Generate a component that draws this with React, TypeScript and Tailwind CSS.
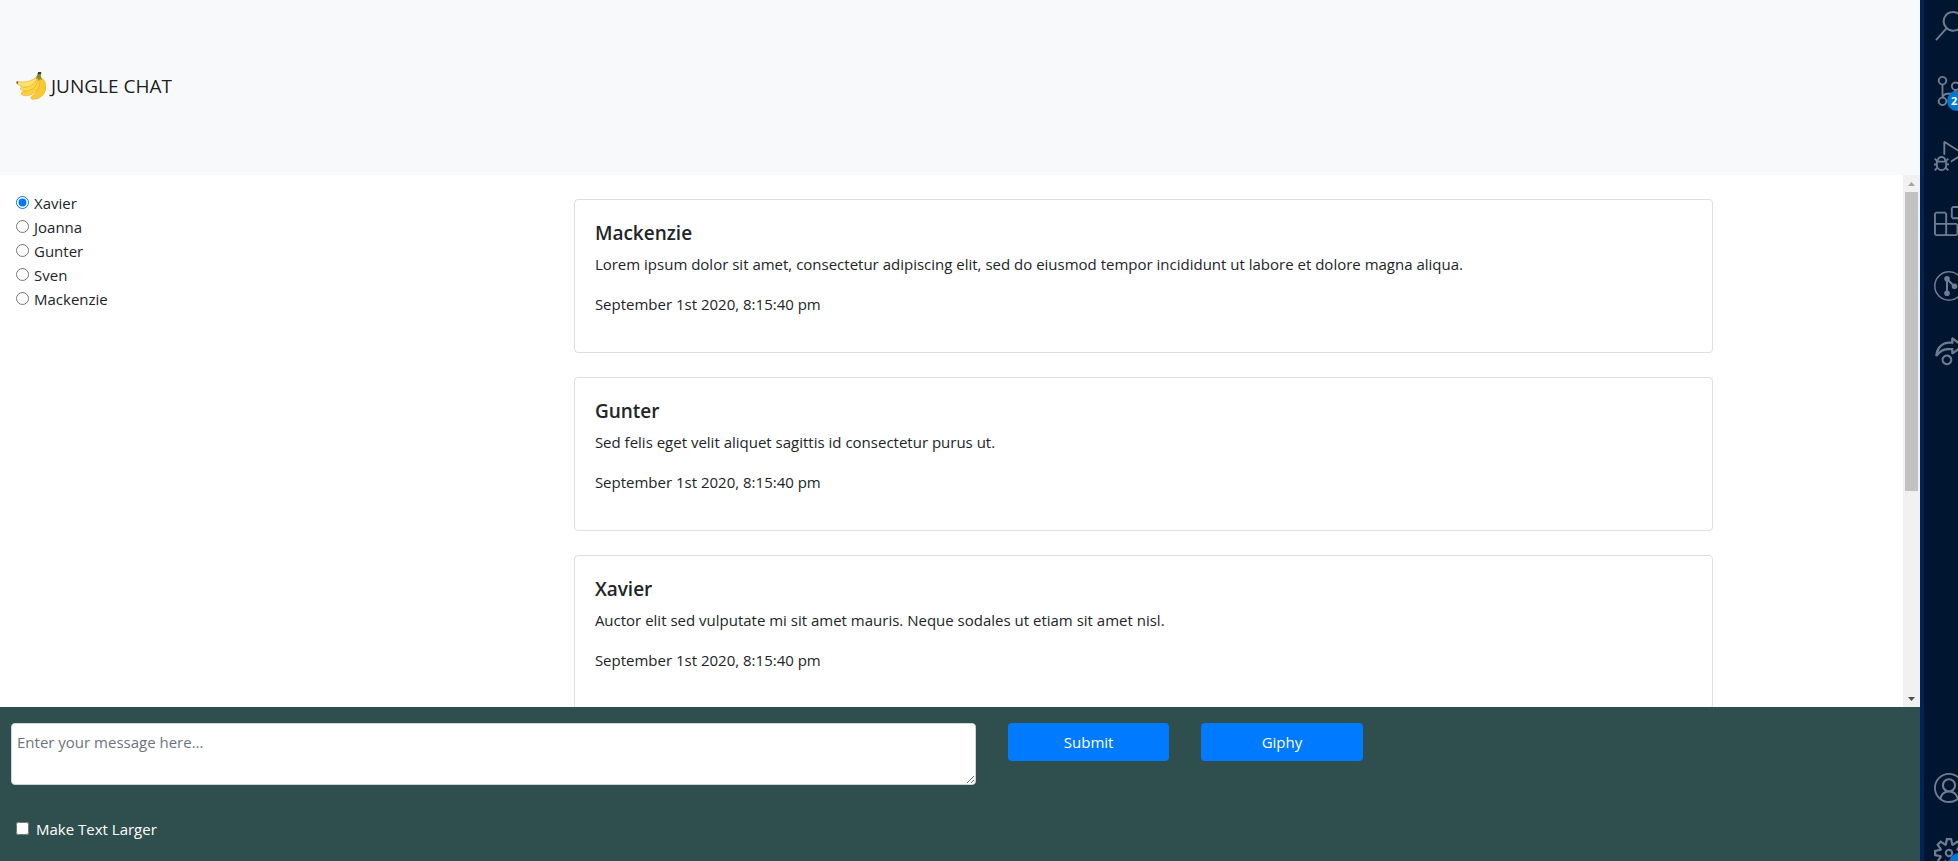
import { useState } from 'react';
import type { ReactNode } from 'react';
import {
  VscAccount,
  VscDebugAlt,
  VscExtensions,
  VscLiveShare,
  VscSearch,
  VscSettingsGear,
  VscSourceControl,
} from 'react-icons/vsc';

const users = ['Xavier', 'Joanna', 'Gunter', 'Sven', 'Mackenzie'];

const messages = [
  {
    author: 'Mackenzie',
    body: 'Lorem ipsum dolor sit amet, consectetur adipiscing elit, sed do eiusmod tempor incididunt ut labore et dolore magna aliqua.',
    date: 'September 1st 2020, 8:15:40 pm',
  },
  {
    author: 'Gunter',
    body: 'Sed felis eget velit aliquet sagittis id consectetur purus ut.',
    date: 'September 1st 2020, 8:15:40 pm',
  },
  {
    author: 'Xavier',
    body: 'Auctor elit sed vulputate mi sit amet mauris. Neque sodales ut etiam sit amet nisl.',
    date: 'September 1st 2020, 8:15:40 pm',
  },
];

function BananaLogo() {
  return (
    <svg viewBox="0 0 30 30" className="size-[30px] shrink-0" aria-hidden="true">
      <path d="M23.500 6C28.500 8 31 13 29.500 19c-1.500 6-7 9.500-13 9.300-1.800-.2-2.200-2-.6-3.100C21 22 24.500 15 23.500 6z" fill="#fbc92f" stroke="#dba120" strokeWidth=".5" />
      <path d="M23.200 6c2 7-.7 13-6 16.500-3.500 2.300-8 2.800-11 1.500-1.800-1-1.200-3 .8-3.200C14 20 20 15 21.500 6z" fill="#fdd13c" stroke="#dba120" strokeWidth=".5" />
      <path d="M22.500 5.500C22 13 18 19 11 20c-3 .4-6-.4-6.500-1.700-.4-1.300.8-2.100 2.500-2.100C14 15.500 19 12 21 5.500z" fill="#fdd94f" stroke="#dba120" strokeWidth=".5" />
      <path d="M22.500 5C20 12.500 14 17 7.500 16.200 3.500 15.500 1 13.500.7 11.200c0-.8.8-1 1.500-.7C9 11.700 16 10.500 21 5z" fill="#ffe168" stroke="#dba120" strokeWidth=".5" />
      <path d="M22 1.500h3l-.2 3.500 1.200 4-2-1-1.500 2-.8-3-2 1.500z" fill="#8b8b2c" />
      <path d="M22 1h3.200v2.200h-3.400z" fill="#4a3a26" />
      <path d="M.4 10.500l1.700.2-.1 1.800-1.200.2z" fill="#5b4425" />
    </svg>
  );
}

function GitLensIcon() {
  return (
    <svg viewBox="0 0 30 30" className="size-[30px]" fill="none" stroke="currentColor" aria-hidden="true">
      <circle cx="15" cy="15" r="14.200" strokeWidth="1.500" />
      <path d="M13 8v14M13 8l7.500 7.500" strokeWidth="2" />
      <g fill="currentColor" stroke="none">
        <circle cx="13" cy="7.800" r="2.800" />
        <circle cx="13" cy="22.300" r="2.800" />
        <circle cx="20.500" cy="15.300" r="2.800" />
      </g>
    </svg>
  );
}

function ActivityButton({ label, children }: { label: string; children: ReactNode }) {
  return (
    <button type="button" aria-label={label} className="relative flex h-[65px] w-[50px] shrink-0 items-center justify-center">
      {children}
    </button>
  );
}

function ActivityBar() {
  return (
    <aside className="flex w-[38px] shrink-0 flex-col justify-between overflow-hidden border-l-4 border-[#002355] bg-[#001530] text-[#707d91]">
      <div className="-mt-[7px] flex flex-col">
        <ActivityButton label="Search"><VscSearch className="size-[30px]" /></ActivityButton>
        <ActivityButton label="Source control">
          <VscSourceControl className="size-[30px]" />
          <span className="absolute left-[23px] top-[33px] flex h-5 w-6 items-center rounded-full bg-[#0078d0] pl-1 font-['Open_Sans',sans-serif] text-[11px] font-bold text-white">2</span>
        </ActivityButton>
        <ActivityButton label="Run and debug"><VscDebugAlt className="size-[30px]" /></ActivityButton>
        <ActivityButton label="Extensions"><VscExtensions className="size-[30px]" /></ActivityButton>
        <ActivityButton label="GitLens"><GitLensIcon /></ActivityButton>
        <ActivityButton label="Live share"><VscLiveShare className="size-[30px]" /></ActivityButton>
      </div>
      <div className="-mb-6 flex flex-col">
        <ActivityButton label="Account"><VscAccount className="size-[30px]" /></ActivityButton>
        <ActivityButton label="Settings">
          <VscSettingsGear className="size-[30px]" />
          <span className="absolute left-[25px] top-[33px] size-5 rounded-full bg-[#0078d0]" />
        </ActivityButton>
      </div>
    </aside>
  );
}

function ScrollTrack() {
  return (
    <div className="flex w-[17px] shrink-0 flex-col items-center bg-[#f1f1f1]" aria-hidden="true">
      <div className="flex h-[17px] shrink-0 items-center">
        <svg viewBox="0 0 7 4" className="h-1 w-[7px]" fill="#a3a3a3"><path d="M0 4 3.500 0 7 4z" /></svg>
      </div>
      <div className="flex w-[13px] flex-1 flex-col">
        <div className="h-3/5 bg-[#c1c1c1]" />
      </div>
      <div className="flex h-[17px] shrink-0 items-center">
        <svg viewBox="0 0 7 4" className="h-1 w-[7px]" fill="#505050"><path d="M0 0 3.500 4 7 0z" /></svg>
      </div>
    </div>
  );
}

export default function App() {
  const [user, setUser] = useState('Xavier');
  const [draft, setDraft] = useState('');
  const [large, setLarge] = useState(false);

  return (
    <div className="flex h-screen overflow-hidden bg-white font-['Open_Sans','Noto_Sans',sans-serif] text-[15px] leading-6 text-[#212529]">
      <div className="flex min-w-0 flex-1 flex-col">
        <header className="flex h-[175px] shrink-0 items-center gap-[5px] bg-[#f8f9fb] px-4 pb-1">
          <BananaLogo />
          <h1 className="text-[19px] leading-[30px] text-black/90">JUNGLE CHAT</h1>
        </header>

        <main className="flex min-h-0 flex-1">
          <fieldset className="w-1/5 shrink-0 px-4 pt-4">
            <legend className="sr-only" aria-label="User" />
            {users.map((name) => (
              <label key={name} className="flex h-6 items-center gap-[5px]">
                <input
                  type="radio"
                  name="user"
                  className="mb-[2px] size-[13px] accent-[#0075ff]"
                  checked={user === name}
                  onChange={() => setUser(name)}
                />
                {name}
              </label>
            ))}
          </fieldset>

          <section className="min-w-0 flex-1 overflow-y-auto [scrollbar-width:none]">
            {messages.map((message) => (
              <article key={message.author} className="mx-auto mt-6 h-[154px] w-3/4 rounded border border-[#dfdfdf] px-5 pt-[21px]">
                <h2 className="mb-[7px] text-[19px] leading-6 font-semibold">{message.author}</h2>
                <p className={large ? 'mb-4 text-2xl' : 'mb-4'}>{message.body}</p>
                <p>{message.date}</p>
              </article>
            ))}
          </section>
          <ScrollTrack />
        </main>

        <footer className="flex h-[154px] shrink-0 flex-col bg-[#2f4f4f] pt-4 text-white">
          <form className="flex items-start gap-8 pl-[11px]" onSubmit={(event) => event.preventDefault()}>
            <textarea
              aria-label="Message"
              placeholder="Enter your message here..."
              value={draft}
              onChange={(event) => setDraft(event.target.value)}
              className="h-[62px] w-[50.55%] rounded border border-[#ced4da] bg-white px-[5px] py-[6px] text-[#495057] placeholder:text-[#6c757d]"
            />
            <button type="submit" className="h-[38px] w-[8.45%] rounded bg-[#007bff]">Submit</button>
            <button type="button" className="h-[38px] w-[8.45%] rounded bg-[#007bff]">Giphy</button>
          </form>
          <label className="mt-8 flex h-6 items-center gap-[7px] px-4">
            <input type="checkbox" className="mb-[2px] size-[13px]" checked={large} onChange={() => setLarge(!large)} />
            Make Text Larger
          </label>
        </footer>
      </div>
      <ActivityBar />
    </div>
  );
}
